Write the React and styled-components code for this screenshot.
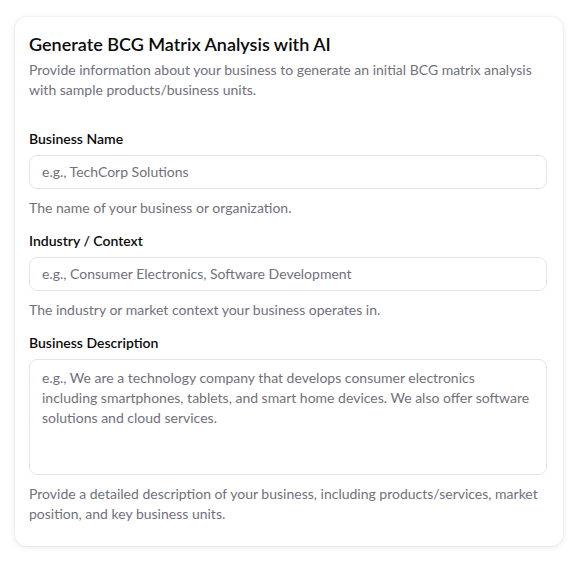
import React from "react";
import styled, { createGlobalStyle } from "styled-components";

const Global = createGlobalStyle`
  html, body { margin: 0; padding: 0; background: #ffffff; }
  body { font-family: Lato, "Noto Sans", sans-serif; color: #09090b; }
  * { box-sizing: border-box; }
`;

const Page = styled.div`
  padding: 17px 15px;
  width: 578px;
`;

const Card = styled.section`
  width: 548px;
  background: #fff;
  border-radius: 12px;
  box-shadow: 0 0 0 1px rgba(0,0,0,0.025), 0 1px 6px rgba(0,0,0,0.10);
  padding: 13px 16px 22px 14px;
  display: flex;
  flex-direction: column;
`;

const Title = styled.h2`
  margin: 0;
  font-size: 18px;
  line-height: 28px;
  font-weight: 600;
  color: #0a0a0a;
`;

const Desc = styled.p`
  margin: 2px 0 0;
  font-size: 14px;
  line-height: 20px;
  color: #71717a;
`;

const Form = styled.div`
  margin-top: 29px;
  display: flex;
  flex-direction: column;
  gap: 13px;
`;

const Field = styled.div`
  display: flex;
  flex-direction: column;
`;

const Label = styled.label`
  font-size: 14px;
  line-height: 20px;
  font-weight: 600;
  color: #0a0a0a;
`;

const Input = styled.input`
  margin-top: 6px;
  height: 34px;
  width: 100%;
  border: 1px solid #e4e4e7;
  border-radius: 8px;
  padding: 0 12px 1px;
  font: inherit;
  font-size: 14px;
  color: #0a0a0a;
  background: #fff;
  outline: none;
  &::placeholder { color: #71717a; }
`;

const TextArea = styled.textarea`
  margin-top: 6px;
  height: 116px;
  width: 100%;
  border: 1px solid #e4e4e7;
  border-radius: 8px;
  padding: 8px 15px 8px 12px;
  font: inherit;
  font-size: 14px;
  line-height: 20px;
  color: #0a0a0a;
  background: #fff;
  resize: none;
  outline: none;
  &::placeholder { color: #71717a; }
`;

const Help = styled.p`
  margin: 9px 0 0;
  font-size: 14px;
  line-height: 20px;
  color: #71717a;
`;

export default function App() {
  return (
    <>
      <Global />
      <Page>
        <Card>
          <Title>Generate BCG Matrix Analysis with AI</Title>
          <Desc>
            Provide information about your business to generate an initial BCG matrix analysis
            with sample products/business units.
          </Desc>
          <Form>
            <Field>
              <Label>Business Name</Label>
              <Input placeholder="e.g., TechCorp Solutions" />
              <Help>The name of your business or organization.</Help>
            </Field>
            <Field>
              <Label>Industry / Context</Label>
              <Input placeholder="e.g., Consumer Electronics, Software Development" />
              <Help>The industry or market context your business operates in.</Help>
            </Field>
            <Field>
              <Label>Business Description</Label>
              <TextArea placeholder="e.g., We are a technology company that develops consumer electronics including smartphones, tablets, and smart home devices. We also offer software solutions and cloud services." />
              <Help>
                Provide a detailed description of your business, including products/services, market
                position, and key business units.
              </Help>
            </Field>
          </Form>
        </Card>
      </Page>
    </>
  );
}
